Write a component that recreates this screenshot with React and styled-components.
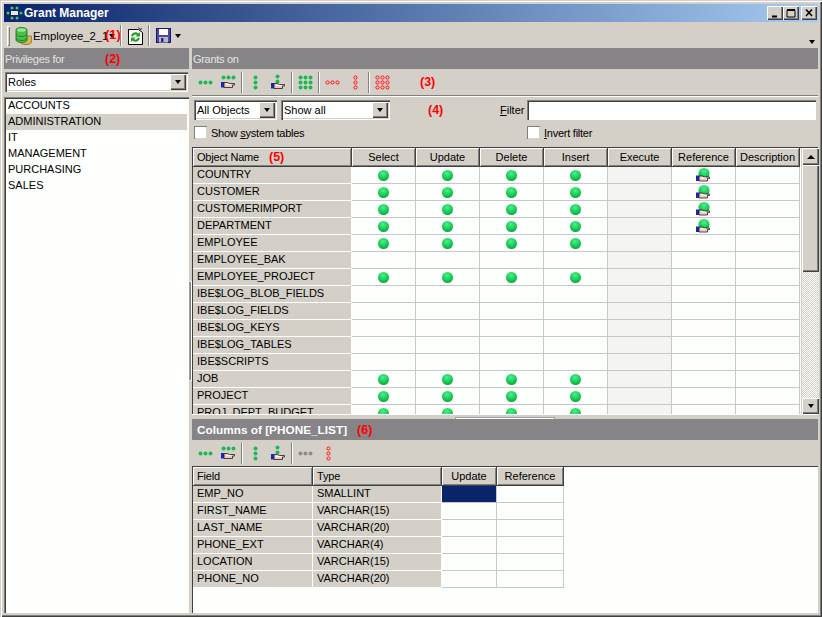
import React from 'react';
import styled, { createGlobalStyle } from 'styled-components';

const GlobalStyle = createGlobalStyle`
  html, body { margin: 0; padding: 0; background: #d4d0c8; }
  body { font-family: "Liberation Sans", Arial, sans-serif; font-size: 11px; color: #000; }
  * { box-sizing: border-box; }
`;

const Window = styled.div`
  width: 822px;
  height: 617px;
  padding: 4px;
  background: #d4d0c8;
  display: flex;
  flex-direction: column;
  overflow: hidden;
  box-shadow: inset 1px 1px 0 #d4d0c8, inset 2px 2px 0 #fff, inset -1px -1px 0 #404040, inset -2px -2px 0 #808080;
`;

const TitleBar = styled.div`
  height: 18px;
  flex: none;
  display: flex;
  align-items: center;
  padding: 0 1px 0 2px;
  color: #fff;
  font-size: 12px;
  font-weight: 700;
  background: linear-gradient(90deg, #0a246a, #a6caf0);
`;

const TitleText = styled.span`
  margin-left: 1px;
  flex: 1;
`;

const WinButton = styled.div`
  width: 16px;
  height: 14px;
  margin-left: ${(p) => p.$gap || 0}px;
  background: #d4d0c8;
  display: flex;
  align-items: center;
  justify-content: center;
  box-shadow: inset 1px 1px 0 #fff, inset -1px -1px 0 #404040, inset -2px -2px 0 #808080;
`;

const MainBar = styled.div`
  height: 25px;
  flex: none;
  margin-top: 1px;
  display: flex;
  align-items: center;
  position: relative;
  padding-left: 3px;
`;

const Gripper = styled.div`
  width: 3px;
  height: 20px;
  margin-right: 5px;
  box-shadow: inset 1px 1px 0 #fff, inset -1px -1px 0 #808080;
`;

const DbName = styled.span`
  margin-left: 1px;
  width: 74px;
  font-size: 11.3px;
  white-space: nowrap;
`;

const Overlay = styled.span`
  position: absolute;
  left: 101px;
  top: 4px;
  color: #f00;
  font-weight: 700;
  font-size: 13px;
`;

const BarSep = styled.div`
  width: 2px;
  height: 21px;
  flex: none;
  margin: 0 ${(p) => p.$r ?? 1}px 0 ${(p) => p.$l ?? 1}px;
  background: #808080;
  border-right: 1px solid #fff;
`;

const ArrowDown = styled.span`
  width: 0;
  height: 0;
  flex: none;
  border-left: 3.5px solid transparent;
  border-right: 3.5px solid transparent;
  border-top: 4px solid #000;
  margin-left: ${(p) => p.$left || 0}px;
  margin-right: ${(p) => p.$right || 0}px;
`;

const ArrowUp = styled.span`
  width: 0;
  height: 0;
  border-left: 4px solid transparent;
  border-right: 4px solid transparent;
  border-bottom: 4px solid #000;
`;

const Chevron = styled(ArrowDown)`
  position: absolute;
  right: 3px;
  bottom: 4px;
`;

const Body = styled.div`
  flex: 1;
  min-height: 0;
  display: flex;
`;

const LeftPane = styled.div`
  width: 185px;
  flex: none;
  display: flex;
  flex-direction: column;
`;

const VSplit = styled.div`
  width: 3px;
  flex: none;
  display: flex;
  align-items: center;
  justify-content: center;
`;

const VGrip = styled.div`
  width: 3px;
  height: 100px;
  background: #808080;
  border: 1px solid #fff;
  border-left-color: #a0a0a0;
`;

const RightPane = styled.div`
  flex: 1;
  min-width: 0;
  display: flex;
  flex-direction: column;
`;

const SectionHeader = styled.div`
  height: 21px;
  flex: none;
  display: flex;
  align-items: center;
  padding-left: ${(p) => p.$pad ?? 1}px;
  background: #868486;
  color: ${(p) => (p.$bold ? '#fff' : '#e4e4e4')};
  font-weight: ${(p) => (p.$bold ? 700 : 400)};
  font-size: ${(p) => (p.$bold ? 11.8 : 11)}px;
  letter-spacing: ${(p) => (p.$bold ? 0 : -0.3)}px;
`;

const HeaderLabel = styled.span`
  width: ${(p) => (p.$w ? `${p.$w}px` : 'auto')};
  flex: none;
`;

const Mark = styled.span`
  color: #f00;
  font-weight: 700;
  font-size: 12.5px;
  letter-spacing: 0;
  flex: none;
  margin-left: ${(p) => p.$left || 0}px;
  width: ${(p) => (p.$w ? `${p.$w}px` : 'auto')};
`;

const RoleBar = styled.div`
  height: 28px;
  flex: none;
  padding: 3px 1px 0 1px;
`;

const Combo = styled.div`
  width: ${(p) => (p.$w ? `${p.$w}px` : '100%')};
  height: 20px;
  flex: none;
  background: #fff;
  display: flex;
  align-items: center;
  padding: 0 2px 0 3px;
  box-shadow: inset 1px 1px 0 #808080, inset 2px 2px 0 #404040, inset -1px -1px 0 #fff, inset -2px -2px 0 #d4d0c8;
`;

const ComboText = styled.span`
  flex: 1;
  white-space: nowrap;
`;

const ComboBtn = styled.div`
  width: 16px;
  height: 16px;
  flex: none;
  background: #d4d0c8;
  display: flex;
  align-items: center;
  justify-content: center;
  box-shadow: inset 1px 1px 0 #fff, inset -1px -1px 0 #404040, inset -2px -2px 0 #808080;
`;

const RoleList = styled.ul`
  flex: 1;
  list-style: none;
  margin: 0;
  padding: 1px 0 0 2px;
  background: #fdfffc;
  box-shadow: inset 1px 1px 0 #808080, inset 2px 2px 0 #404040, inset -1px -1px 0 #fff;
`;

const RoleItem = styled.li`
  height: 16px;
  line-height: 14px;
  padding-left: 2px;
  margin-right: 2px;
  background: ${(p) => (p.$active ? '#d4d0c8' : 'transparent')};
`;

const Tools = styled.div`
  height: 26px;
  flex: none;
  display: flex;
  align-items: center;
  padding-left: 2px;
`;

const ToolBtn = styled.div`
  width: 23px;
  height: 22px;
  flex: none;
  display: flex;
  align-items: center;
  justify-content: center;
`;

const Rule = styled.div`
  height: 2px;
  flex: none;
  background: #808080;
  border-bottom: 1px solid #fff;
`;

const FilterArea = styled.div`
  height: 50px;
  flex: none;
  padding: 3px 2px 0 2px;
  display: flex;
  flex-direction: column;
  gap: 6px;
`;

const FilterRow = styled.div`
  display: flex;
  align-items: center;
`;

const ShowCombo = styled(Combo)`
  margin-left: 4px;
`;

const FilterLabel = styled.label`
  width: 27px;
  flex: none;
`;

const FilterInput = styled.input`
  flex: 1;
  min-width: 0;
  height: 20px;
  border: 0;
  outline: 0;
  background: #fdfffc;
  box-shadow: inset 1px 1px 0 #808080, inset 2px 2px 0 #404040, inset -1px -1px 0 #fff;
`;

const CheckLabel = styled.label`
  display: flex;
  align-items: center;
  gap: 4px;
  width: ${(p) => (p.$w ? `${p.$w}px` : 'auto')};
  letter-spacing: -0.25px;
`;

const CheckBox = styled.span`
  width: 13px;
  height: 13px;
  background: #fff;
  box-shadow: inset 1px 1px 0 #808080, inset -1px -1px 0 #d4d0c8;
`;

const GrantsArea = styled.div`
  height: 267px;
  flex: none;
  display: flex;
  padding: 1px 0 0 1px;
  box-shadow: inset 1px 1px 0 #404040;
`;

const GridClip = styled.div`
  width: 608px;
  flex: none;
  overflow: hidden;
  background: #fdfffc;
`;

const Grid = styled.div`
  display: grid;
  grid-template-columns: ${(p) => p.$cols};
  grid-template-rows: 19px;
  grid-auto-rows: 17px;
  width: ${(p) => p.$width}px;
`;

const HeadCell = styled.div`
  display: flex;
  align-items: center;
  justify-content: ${(p) => (p.$left ? 'flex-start' : 'center')};
  padding-left: ${(p) => (p.$left ? 4 : 0)}px;
  background: #d4d0c8;
  white-space: nowrap;
  letter-spacing: ${(p) => (p.$left ? -0.2 : 0)}px;
  border-right: 1px solid #404040;
  border-bottom: 1px solid #404040;
  box-shadow: inset 1px 1px 0 #fff, inset -1px -1px 0 #808080;
`;

const NameCell = styled.div`
  display: flex;
  align-items: center;
  padding: 0 0 2px 4px;
  background: #d4d0c8;
  border-right: 1px solid #fff;
  border-bottom: 1px solid #fff;
  white-space: nowrap;
  overflow: hidden;
`;

const DataCell = styled.div`
  display: flex;
  align-items: center;
  justify-content: center;
  background: ${(p) => (p.$selected ? '#0a246a' : p.$shaded ? '#f4f4f2' : '#fdfffc')};
  border-right: 1px solid #c8c8c8;
  border-bottom: 1px solid #c8c8c8;
`;

const Ball = styled.span`
  width: 11px;
  height: 11px;
  border-radius: 50%;
  background: radial-gradient(circle at 45% 30%, #4cf08c 0%, #12c850 55%, #0a7c30 100%);
`;

const ScrollBar = styled.div`
  width: 17px;
  flex: none;
  margin-left: 1px;
  display: flex;
  flex-direction: column;
  background-color: #eee;
  background-image: repeating-conic-gradient(#d4d0c8 0 25%, #fff 0 50%);
  background-size: 2px 2px;
`;

const ScrollBtn = styled.div`
  height: ${(p) => p.$h}px;
  flex: none;
  background: #d4d0c8;
  display: flex;
  align-items: center;
  justify-content: center;
  box-shadow: inset 1px 1px 0 #fff, inset -1px -1px 0 #404040, inset -2px -2px 0 #808080;
`;

const ScrollGap = styled.div`
  flex: 1;
`;

const HSplit = styled.div`
  height: 5px;
  flex: none;
  display: flex;
  align-items: flex-start;
  justify-content: center;
  padding-top: 2px;
  border-top: 1px solid #fff;
`;

const HGrip = styled.div`
  width: 100px;
  height: 2px;
  background: #fff;
  border: 1px solid #a0a0a0;
  border-bottom: 0;
`;

const ColumnsPane = styled.div`
  flex: 1;
  min-height: 0;
  padding: 1px 0 0 1px;
  background: #fdfffc;
  box-shadow: inset 1px 1px 0 #404040, inset -1px -1px 0 #fff;
`;

const Hand = ({ x = 0, y = 0 }) => (
  <g transform={`translate(${x} ${y})`}>
    <rect x="0" y="1" width="3" height="5.5" fill="#1428c0" />
    <path d="M3 1.500h3.500l2 1H13.500V4h-2v2.500H3z" fill="#f0c8c4" stroke="#202020" strokeWidth="0.8" />
    <path d="M5 3.500h5" stroke="#fff" strokeWidth="0.9" />
  </g>
);

const Dots = ({ cols = 1, rows = 1, color = 'green', withHand }) => {
  const fill = { green: '#1cb852', red: '#ffc4c4', grey: '#8c8c8c' }[color];
  const list = [];
  for (let r = 0; r < rows; r++) {
    for (let c = 0; c < cols; c++) list.push([c, r]);
  }
  if (withHand === 'row') {
    return (
      <svg width="15" height="14" viewBox="0 0 15 14">
        {list.map(([c, r]) => <circle key={`${c}-${r}`} cx={2.5 + c * 5} cy="2.5" r="2" fill={fill} />)}
        <Hand x={0} y={6} />
      </svg>
    );
  }
  if (withHand === 'col') {
    return (
      <svg width="15" height="16" viewBox="0 0 15 16">
        {list.map(([c, r]) => <circle key={`${c}-${r}`} cx="6.5" cy={2.5 + r * 5} r="2" fill={fill} />)}
        <Hand x={0} y={8} />
      </svg>
    );
  }
  return (
    <svg width={cols * 5} height={rows * 5} viewBox={`0 0 ${cols * 5} ${rows * 5}`}>
      {list.map(([c, r]) => (
        <circle
          key={`${c}-${r}`}
          cx={2.5 + c * 5}
          cy={2.5 + r * 5}
          r={color === 'red' ? 1.6 : 2}
          fill={fill}
          stroke="#f80000"
          strokeWidth={color === 'red' ? 0.9 : 0}
        />
      ))}
    </svg>
  );
};

const RefIcon = () => (
  <svg width="15" height="14" viewBox="0 0 15 14">
    <defs>
      <radialGradient id="refBall" cx="50%" cy="30%" r="70%">
        <stop offset="0%" stopColor="#4cf08c" />
        <stop offset="70%" stopColor="#12c850" />
        <stop offset="100%" stopColor="#0a7c30" />
      </radialGradient>
    </defs>
    <circle cx="8" cy="5.500" r="5.500" fill="url(#refBall)" />
    <Hand x={0} y={6.5} />
  </svg>
);

const AppGlyph = () => (
  <svg width="17" height="14" viewBox="0 0 17 14">
    <rect x="5" y="5" width="7" height="4" fill="#e8e8e8" />
    <g fill="#4cc070">
      <circle cx="6" cy="2" r="1.500" /><circle cx="11" cy="2" r="1.500" />
      <circle cx="2" cy="7" r="1.500" /><circle cx="15" cy="7" r="1.500" />
      <circle cx="6" cy="12" r="1.500" /><circle cx="11" cy="12" r="1.500" />
    </g>
  </svg>
);

const DbIcon = () => (
  <svg width="17" height="18" viewBox="0 0 17 18">
    <path d="M5 9h11.500v6c0 1.500-2.500 2.500-5.500 2.500S5 16.500 5 15z" fill="#d8b848" stroke="#806820" strokeWidth="0.7" />
    <path d="M1 3c0-1.500 2.500-2.500 5.500-2.500S12 1.500 12 3v10c0 1.500-2.500 2.500-5.500 2.500S1 14.500 1 13z" fill="#48c048" stroke="#186818" strokeWidth="0.8" />
    <path d="M1 7c0 1.500 2.500 2.500 5.500 2.500S12 8.500 12 7M1 11c0 1.500 2.500 2.500 5.500 2.500S12 12.500 12 11" fill="none" stroke="#186818" strokeWidth="0.7" />
    <ellipse cx="6.500" cy="3" rx="4.500" ry="1.800" fill="#90e890" />
  </svg>
);

const RefreshIcon = () => (
  <svg width="15" height="18" viewBox="0 0 15 18">
    <path d="M.5 2.500h10l4 3v12H.5z" fill="#fff" stroke="#000" />
    <path d="M10.500 .5l1.500 2 2-1" fill="none" stroke="#000" strokeWidth="0.8" />
    <path d="M3 9a4.500 4.500 0 0 1 7.500-2.500L12 5v4.500H7.500L9 8a2.500 2.500 0 0 0-4 1.500z" fill="#20a020" />
    <path d="M12 11a4.500 4.500 0 0 1-7.500 2.500L3 15v-4.500h4.500L6 12a2.500 2.500 0 0 0 4-1.500z" fill="#20a020" />
  </svg>
);

const SaveIcon = () => (
  <svg width="15" height="15" viewBox="0 0 15 15">
    <rect x="0.500" y="0.500" width="14" height="14" fill="#4848a8" stroke="#181868" />
    <rect x="3" y="1" width="9" height="6" fill="#fff" />
    <rect x="3" y="9" width="9" height="5.500" fill="#b8b8c8" />
    <rect x="5" y="10" width="2.500" height="4" fill="#303068" />
  </svg>
);

const WinGlyph = ({ d, width = 1 }) => (
  <svg width="10" height="10" viewBox="0 0 10 10">
    <path d={d} fill="none" stroke="#000" strokeWidth={width} />
  </svg>
);

const roles = ['ACCOUNTS', 'ADMINISTRATION', 'IT', 'MANAGEMENT', 'PURCHASING', 'SALES'];

const grantCols = ['Select', 'Update', 'Delete', 'Insert', 'Execute', 'Reference', 'Description'];

const grants = [
  { name: 'COUNTRY', on: true, ref: true },
  { name: 'CUSTOMER', on: true, ref: true },
  { name: 'CUSTOMERIMPORT', on: true, ref: true },
  { name: 'DEPARTMENT', on: true, ref: true },
  { name: 'EMPLOYEE', on: true },
  { name: 'EMPLOYEE_BAK' },
  { name: 'EMPLOYEE_PROJECT', on: true },
  { name: 'IBE$LOG_BLOB_FIELDS' },
  { name: 'IBE$LOG_FIELDS' },
  { name: 'IBE$LOG_KEYS' },
  { name: 'IBE$LOG_TABLES' },
  { name: 'IBE$SCRIPTS' },
  { name: 'JOB', on: true },
  { name: 'PROJECT', on: true },
  { name: 'PROJ_DEPT_BUDGET', on: true },
];

const fields = [
  ['EMP_NO', 'SMALLINT'],
  ['FIRST_NAME', 'VARCHAR(15)'],
  ['LAST_NAME', 'VARCHAR(20)'],
  ['PHONE_EXT', 'VARCHAR(4)'],
  ['LOCATION', 'VARCHAR(15)'],
  ['PHONE_NO', 'VARCHAR(20)'],
];

const App = () => (
  <>
    <GlobalStyle />
    <Window>
      <TitleBar>
        <AppGlyph />
        <TitleText>Grant Manager</TitleText>
        <WinButton><WinGlyph d="M2 8.500h5" width={2} /></WinButton>
        <WinButton><WinGlyph d="M1 1.500h8M1 2.500h8v6.500H1z" /></WinButton>
        <WinButton $gap={2}><WinGlyph d="M2 1.500l6 6.500M8 1.500l-6 6.500" width={1.6} /></WinButton>
      </TitleBar>
      <MainBar>
        <Gripper />
        <DbIcon />
        <DbName>Employee_2_1</DbName>
        <ArrowDown $left={2} $right={4} />
        <Overlay>(1)</Overlay>
        <BarSep $l={1} $r={6} />
        <RefreshIcon />
        <BarSep $l={5} $r={6} />
        <SaveIcon />
        <ArrowDown $left={4} />
        <Chevron />
      </MainBar>
      <Body>
        <LeftPane>
          <SectionHeader>
            <HeaderLabel $w={100}>Privileges for</HeaderLabel>
            <Mark>(2)</Mark>
          </SectionHeader>
          <RoleBar>
            <Combo>
              <ComboText>Roles</ComboText>
              <ComboBtn><ArrowDown /></ComboBtn>
            </Combo>
          </RoleBar>
          <RoleList>
            {roles.map((r) => (
              <RoleItem key={r} $active={r === 'ADMINISTRATION'}>{r}</RoleItem>
            ))}
          </RoleList>
        </LeftPane>
        <VSplit><VGrip /></VSplit>
        <RightPane>
          <SectionHeader>
            <HeaderLabel>Grants on</HeaderLabel>
          </SectionHeader>
          <Tools>
            <ToolBtn><Dots cols={3} /></ToolBtn>
            <ToolBtn><Dots cols={3} withHand="row" /></ToolBtn>
            <BarSep />
            <ToolBtn><Dots rows={3} /></ToolBtn>
            <ToolBtn><Dots rows={2} withHand="col" /></ToolBtn>
            <BarSep />
            <ToolBtn><Dots cols={3} rows={3} /></ToolBtn>
            <BarSep />
            <ToolBtn><Dots cols={3} color="red" /></ToolBtn>
            <ToolBtn><Dots rows={3} color="red" /></ToolBtn>
            <BarSep />
            <ToolBtn><Dots cols={3} rows={3} color="red" /></ToolBtn>
            <Mark $left={26}>(3)</Mark>
          </Tools>
          <Rule />
          <FilterArea>
            <FilterRow>
              <Combo $w={83}>
                <ComboText>All Objects</ComboText>
                <ComboBtn><ArrowDown /></ComboBtn>
              </Combo>
              <ShowCombo $w={109}>
                <ComboText>Show all</ComboText>
                <ComboBtn><ArrowDown /></ComboBtn>
              </ShowCombo>
              <Mark $left={38} $w={72}>(4)</Mark>
              <FilterLabel><u>F</u>ilter</FilterLabel>
              <FilterInput readOnly />
            </FilterRow>
            <FilterRow>
              <CheckLabel $w={333}><CheckBox /><span>Show <u>s</u>ystem tables</span></CheckLabel>
              <CheckLabel><CheckBox /><span><u>I</u>nvert filter</span></CheckLabel>
            </FilterRow>
          </FilterArea>
          <GrantsArea>
            <GridClip>
              <Grid $cols="159px repeat(7, 64px)" $width={607}>
                <HeadCell $left>Object Name<Mark $left={10}>(5)</Mark></HeadCell>
                {grantCols.map((c) => <HeadCell key={c}>{c}</HeadCell>)}
                {grants.map((g) => (
                  <React.Fragment key={g.name}>
                    <NameCell>{g.name}</NameCell>
                    {grantCols.map((c) => (
                      <DataCell key={c} $shaded={c === 'Execute'}>
                        {g.on && ['Select', 'Update', 'Delete', 'Insert'].includes(c) && <Ball />}
                        {g.ref && c === 'Reference' && <RefIcon />}
                      </DataCell>
                    ))}
                  </React.Fragment>
                ))}
              </Grid>
            </GridClip>
            <ScrollBar>
              <ScrollBtn $h={17}><ArrowUp /></ScrollBtn>
              <ScrollBtn $h={107} />
              <ScrollGap />
              <ScrollBtn $h={16}><ArrowDown /></ScrollBtn>
            </ScrollBar>
          </GrantsArea>
          <HSplit><HGrip /></HSplit>
          <SectionHeader $bold $pad={5}>
            <HeaderLabel>Columns of [PHONE_LIST]</HeaderLabel>
            <Mark $left={10}>(6)</Mark>
          </SectionHeader>
          <Tools>
            <ToolBtn><Dots cols={3} /></ToolBtn>
            <ToolBtn><Dots cols={3} withHand="row" /></ToolBtn>
            <BarSep />
            <ToolBtn><Dots rows={3} /></ToolBtn>
            <ToolBtn><Dots rows={2} withHand="col" /></ToolBtn>
            <BarSep />
            <ToolBtn><Dots cols={3} color="grey" /></ToolBtn>
            <ToolBtn><Dots rows={3} color="red" /></ToolBtn>
          </Tools>
          <ColumnsPane>
            <Grid $cols="120px 129px 55px 67px" $width={371}>
              <HeadCell $left>Field</HeadCell>
              <HeadCell $left>Type</HeadCell>
              <HeadCell>Update</HeadCell>
              <HeadCell>Reference</HeadCell>
              {fields.map(([field, type], i) => (
                <React.Fragment key={field}>
                  <NameCell>{field}</NameCell>
                  <NameCell>{type}</NameCell>
                  <DataCell $selected={i === 0} />
                  <DataCell />
                </React.Fragment>
              ))}
            </Grid>
          </ColumnsPane>
        </RightPane>
      </Body>
    </Window>
  </>
);

export default App;
